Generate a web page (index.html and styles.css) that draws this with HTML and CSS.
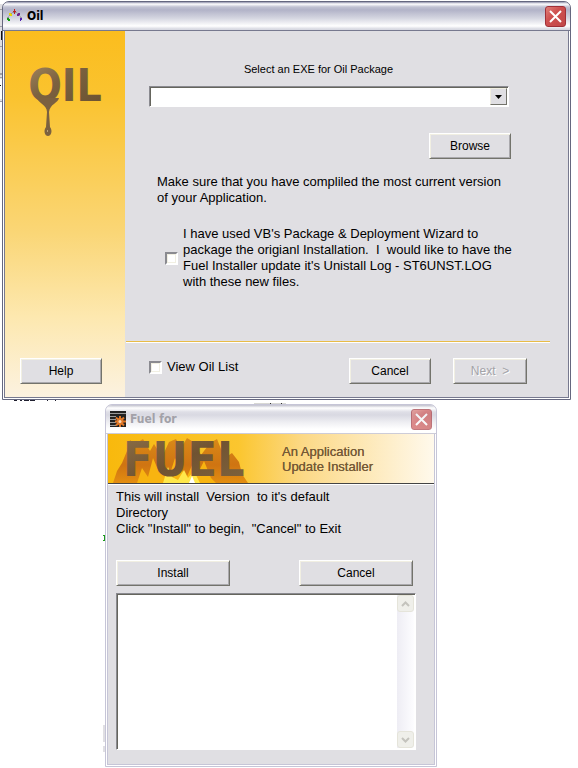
FILE: index.html
```html
<!DOCTYPE html>
<html lang="en">
<head>
<meta charset="utf-8">
<title>Oil</title>
<meta name="viewport" content="width=device-width, initial-scale=1">
<link rel="stylesheet" href="styles.css">
</head>
<body>
<svg class="behind" aria-hidden="true">
  <path fill="#e0dfe3" d="M0 4h3v98h-3z"/>
  <path fill="#a0a0a8" d="M0 9h3v1h-3zM0 26h3v1h-3zM0 46h3v1h-3zM0 73h3v2h-3zM0 77h3v1h-3zM0 101h3v1h-3z"/>
  <path fill="#fff" d="M0 79h3v20h-3z"/>
  <path fill="#111" d="M1 31h1v9h-1zM0 85h1v1h-1z"/>
  <path fill="#202030" d="M14 400h3v1h-3zM20 400h2v1h-2zM24 400h5v1h-5zM30 400h5v1h-5zM47 400h1v1h-1zM55 400h1v1h-1z"/>
  <path fill="#d8d8d4" d="M254 403h32v2h-32z"/>
  <path fill="#333" d="M270 403h1v2h-1zM281 403h1v2h-1z"/>
  <path fill="#1a9a1a" d="M103 535h2v1h-2zM104 536h1v4h-1zM103 540h2v1h-2z"/>
  <path fill="#e0dfe3" d="M103 725h2v17h-2zM103 746h2v6h-2z"/>
</svg>
<main class="desktop">
  <section class="window" aria-label="Oil">
    <header class="titlebar">
      <svg class="app-icon" viewBox="0 0 16 16" aria-hidden="true">
        <path fill="none" stroke="#555" stroke-dasharray="1 1" d="M1 12V9l2-2 3-3h3l3 3 2 2v3"/>
        <path fill="#129a12" d="M0 10h2v1h1v2H1v-1H0z"/><path fill="#e8d800" d="M2 5h2v1h1v2H3V7H2z"/>
        <path fill="#c02020" d="M7 1h1v2h1v1H8v2H7V4H6V3h1z"/><path fill="#702090" d="M11 5h2v2h-1v1h-2V6h1z"/>
        <path fill="#5020b0" d="M13 10h2v2h-1v1h-1z"/>
      </svg>
      <h1 class="title">Oil</h1>
      <button class="close" aria-label="Close"><svg viewBox="0 0 19 19"><path d="M4 4l11 11M15 4L4 15"/></svg></button>
    </header>
    <div class="oil-body">
      <aside class="side">
        <svg class="oil-logo" viewBox="0 0 80 110" role="img" aria-label="Oil">
          <defs><linearGradient id="oil" x1="0" y1="0" x2="1" y2="1"><stop offset="0" stop-color="#a58a60"/><stop offset=".4" stop-color="#7c6240"/><stop offset="1" stop-color="#69502f"/></linearGradient></defs>
          <text class="oil-text" x="40" y="70">OIL</text>
          <path fill="#7b6140" d="M12 67h22c-1 5-9 6-10 14l1 15c3 4 1 9-2 9s-5-5-2-9l1-15c0-7-9-9-10-14z"/>
          <path fill="#b9a27a" d="M22 99h1v2h-1z"/>
        </svg>
        <button class="btn help">Help</button>
      </aside>
      <form class="oil-form">
        <div class="options">
          <label class="select-label" for="exe">Select an EXE for Oil Package</label>
          <div class="combo">
            <select id="exe"><option></option></select>
            <span class="arrow" aria-hidden="true"><svg viewBox="0 0 7 4"><path d="M0 0h7L3.500 4z"/></svg></span>
          </div>
          <button class="btn browse" type="button">Browse</button>
          <p class="note">Make sure that you have compliled the most current version<br>of your Application.</p>
          <label class="check wizard"><input type="checkbox"><span>I have used VB's Package &amp; Deployment Wizard to<br>package the origianl Installation.&nbsp; I&nbsp; would like to have the<br>Fuel Installer update it's Unistall Log - ST6UNST.LOG<br>with these new files.</span></label>
        </div>
        <hr class="rule">
        <div class="actions">
          <label class="check list"><input type="checkbox"><span>View Oil List</span></label>
          <button class="btn" type="button">Cancel</button>
          <button class="btn next" type="button" disabled>Next &nbsp;&gt;</button>
        </div>
      </form>
    </div>
  </section>

  <section class="window inactive" aria-label="Fuel for">
    <header class="titlebar">
      <svg class="app-icon" viewBox="0 0 16 16" aria-hidden="true">
        <path fill="#222" d="M0 0h16v16H0z"/>
        <path stroke="#999" d="M0 2.500h16M0 5.500h6M0 8.500h6M0 11.500h6M0 14.500h6"/>
        <g stroke="#e07828" stroke-width="2"><path d="M10 5v11M5 10.500h11M6 6.500l8 8M14 6.500l-8 8"/></g>
        <circle cx="10" cy="10.500" r="3.500" fill="#e07828"/><circle cx="10" cy="10.500" r="1.500" fill="#f8d8b8"/>
      </svg>
      <h2 class="title">Fuel for</h2>
      <button class="close" aria-label="Close"><svg viewBox="0 0 19 19"><path d="M4 4l11 11M15 4L4 15"/></svg></button>
    </header>
    <div class="banner">
      <svg class="fuel-logo" viewBox="0 0 145 49" role="img" aria-label="Fuel">
        <defs>
          <linearGradient id="fire" x1="0" y1="0" x2="0" y2="1"><stop offset="0" stop-color="#d98a18"/><stop offset=".6" stop-color="#cf7412"/><stop offset="1" stop-color="#e48e10"/></linearGradient>
          <linearGradient id="metal" x1="0" y1="0" x2="1" y2="1"><stop offset="0" stop-color="#8d7048"/><stop offset=".5" stop-color="#705332"/><stop offset="1" stop-color="#80643e"/></linearGradient>
        </defs>
        <path fill="url(#fire)" d="M5 49l4-12 5-8 5-12 3-11 5 4 8-5 7 12 4-7 8 13 7-15 7-3 5 9 6-10 8 5 6 12 9-12 7-4 4 10 5 8 6-4 7 9 3 12 6 9z"/>
        <path fill="#f8b410" d="M29 49l5-15 6 9 5-19 6 14 5-9 5 14 6-19 6 10 5 11 7-16 5 10 6-12 7 17 5 5z"/>
        <path fill="#ffe84a" d="M55 49l5-16 4 10 6 3 6-10 4 8 6-7 6 12z"/>
        <path fill="#fff" d="M81 49l3-7 3 7z"/>
        <text class="fuel-text" x="15" y="42">FUEL</text>
      </svg>
      <p class="tagline">An Application<br>Update Installer</p>
    </div>
    <div class="fuel-body">
      <p class="intro">This will install&nbsp; Version&nbsp; to it's default<br>Directory<br>Click "Install" to begin,&nbsp; "Cancel" to Exit</p>
      <div class="fuel-actions">
        <button class="btn">Install</button>
        <button class="btn">Cancel</button>
      </div>
      <div class="log">
        <textarea aria-label="Install log" readonly></textarea>
        <div class="scroll" aria-hidden="true">
          <span class="thumb"><svg viewBox="0 0 9 6"><path d="M1 5l3.500-3.500L8 5"/></svg></span>
          <span class="thumb"><svg viewBox="0 0 9 6"><path d="M1 1l3.500 3.500L8 1"/></svg></span>
        </div>
      </div>
    </div>
  </section>
</main>
</body>
</html>
```
FILE: styles.css
```css
* { box-sizing: border-box; }

body {
  margin: 0;
  background: #fff;
  color: #000;
  font: 13px/16px "Liberation Sans", Arial, sans-serif;
}

h1, h2, p, hr { margin: 0; }

.behind {
  position: absolute;
  top: 0;
  left: 0;
  width: 300px;
  height: 760px;
  z-index: -1;
}

.desktop {
  display: flex;
  flex-direction: column;
  gap: 4px;
  padding: 1px 7px 2px 2px;
}

.window {
  display: flex;
  flex-direction: column;
  background: #e0dfe3;
  border: 1px solid #65677f;
  border-radius: 7px 7px 0 0;
  box-shadow: inset 0 0 0 1px #fff, inset 0 0 0 2px #77798f;
  padding: 0 2px 2px;
}

.titlebar {
  display: flex;
  align-items: center;
  gap: 4px;
  height: 29px;
  margin: 0 -2px;
  padding: 0 4px;
  border-bottom: 1px solid #77798f;
  border-radius: 6px 6px 0 0;
  background: linear-gradient(#8e90aa, #fff 2px, #c0c1d2 5px, #b2b3c8 8px, #d4d5e0 16px, #fff 24px, #d8d9e2 27px);
}

.app-icon { width: 16px; height: 16px; }

.title {
  flex: 1;
  font: bold 12px/16px "DejaVu Sans Condensed", "DejaVu Sans", sans-serif;
}

.close {
  width: 21px;
  height: 21px;
  padding: 0;
  border: 1px solid #a03038;
  border-radius: 3px;
  background: linear-gradient(135deg, #e08078, #cf5050 40%, #c04848);
}
.close svg { display: block; width: 19px; height: 19px; }
.close path { fill: none; stroke: #fff; stroke-width: 2; }

.btn {
  width: 82px;
  height: 26px;
  padding: 0;
  border: 1px solid;
  border-color: #fff #73736b #73736b #fff;
  background: #e0dfe3;
  box-shadow: inset 1px 1px #f1efe2, inset -1px -1px #aaa9ad;
  color: #000;
  font: 12px/16px "Liberation Sans", Arial, sans-serif;
}
.btn:disabled { color: #a4a3a8; text-shadow: 1px 1px #fff; }

.oil-body {
  display: grid;
  grid-template-columns: 120px 1fr;
}

.side {
  display: flex;
  flex-direction: column;
  justify-content: space-between;
  align-items: center;
  padding: 0 8px 13px 0;
  background: linear-gradient(#fbbd1e, #fac32f 18%, #fad676 55%, #fde8af 78%, #fcf2e0);
}
.oil-logo { width: 80px; height: 110px; margin-left: 8px; }
.oil-text {
  fill: url(#oil);
  font: bold 44px "DejaVu Sans Condensed", sans-serif;
  text-anchor: middle;
}

.oil-form { display: flex; flex-direction: column; }
.options { display: flex; flex-direction: column; padding: 30px 24px 0; }
.select-label { align-self: center; font-size: 11px; margin-right: 56px; }

.combo { display: flex; position: relative; margin: 9px 35px 0 0; }
.combo select {
  width: 100%;
  height: 21px;
  appearance: none;
  border: 1px solid;
  border-color: #8a8a90 #fff #fff #8a8a90;
  border-radius: 0;
  background: #fff;
  box-shadow: inset 1px 1px #65655d;
}
.arrow {
  position: absolute;
  top: 2px;
  right: 2px;
  display: grid;
  place-items: center;
  width: 17px;
  height: 17px;
  border: 1px solid;
  border-color: #f1efe2 #73736b #73736b #f1efe2;
  background: #e0dfe3;
  pointer-events: none;
}
.arrow svg { width: 7px; height: 4px; }

.browse { align-self: flex-end; margin: 26px 33px 0 0; }
.note { margin: 15px 0 0 8px; white-space: nowrap; }

.check { display: flex; align-items: center; gap: 5px; }
.check input {
  appearance: none;
  flex: none;
  width: 13px;
  height: 13px;
  margin: 0;
  border: 2px solid;
  border-color: #8a8a90 #fff #fff #8a8a90;
  background: #fff;
  box-shadow: inset 0 0 0 1px #f1efe2;
}
.check input:checked { background: #444; }
.wizard { margin: 20px 0 0 16px; white-space: nowrap; }

.rule {
  height: 2px;
  margin: 51px 18px 0 1px;
  border: 0;
  border-top: 1px solid #e8bc48;
  background: #fff;
}
.actions { display: flex; align-items: flex-start; gap: 22px; padding: 15px 41px 13px 24px; }
.list { flex: 1; margin-top: 1px; }
.next { width: 74px; }

.inactive {
  width: min(332px, 100%);
  margin-left: 103px;
  border-color: #c6c5d7;
  box-shadow: inset 0 0 0 1px #fff, inset 0 0 0 2px #c6c5d7;
}
.inactive .titlebar {
  border-bottom-color: #cdccd8;
  background: linear-gradient(#c0c0cc, #fff 3px, #dedee6 7px, #d9d9e2 10px, #eeeef2 17px, #fff 24px);
}
.inactive .title { color: #a2a1a8; }
.inactive .close { opacity: .65; }

.banner {
  display: flex;
  align-items: center;
  background: linear-gradient(90deg, #f8b90d, #fbc62f 40%, #fcd987 60%, #fff9ec);
}
.fuel-logo { width: 145px; height: 49px; overflow: visible; }
.fuel-text {
  fill: url(#metal);
  font: bold 48px "DejaVu Sans Condensed", sans-serif;
}
.tagline {
  margin-left: 29px;
  color: #755a36;
  font-size: 13px;
  line-height: 15px;
  text-shadow: 0 0 #755a36;
}

.fuel-body {
  padding: 5px 18px 14px 8px;
  border-top: 1px solid #444;
  box-shadow: inset 0 1px #fff;
}
.fuel-actions { display: flex; justify-content: space-between; margin: 23px 3px 7px 0; }
.fuel-actions .btn { width: 114px; }

.log {
  display: flex;
  height: 157px;
  border: 1px solid;
  border-color: #8a8a90 #fff #fff #8a8a90;
  background: #fff;
  padding: 1px;
  box-shadow: inset 1px 1px #65655d;
}
.log textarea { flex: 1; border: 0; resize: none; background: transparent; }
.scroll {
  display: flex;
  flex-direction: column;
  justify-content: space-between;
  width: 17px;
  background: linear-gradient(90deg, #eeedf4, #fdfdff);
}
.thumb {
  display: grid;
  place-items: center;
  height: 17px;
  border: 1px solid #e5e4da;
  border-radius: 3px;
  background: #efefea;
}
.thumb svg { width: 9px; height: 6px; fill: none; stroke: #c4c3bd; stroke-width: 2; }
```
